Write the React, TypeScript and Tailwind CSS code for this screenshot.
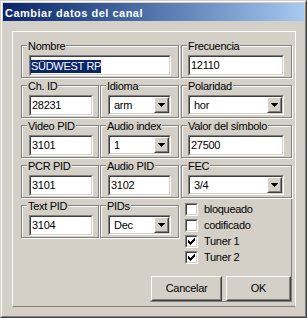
import React from "react";

function Sunken({ className, children }: { className: string; children?: React.ReactNode }) {
  return (
    <div className={"border border-t-[#808080] border-l-[#808080] border-b-white border-r-white " + className}>
      <div className="h-full border border-t-[#404040] border-l-[#404040] border-b-[#d4d0c8] border-r-[#d4d0c8] bg-white">
        {children}
      </div>
    </div>
  );
}

function Raised({ className, children }: { className: string; children?: React.ReactNode }) {
  return (
    <div className={"border border-t-white border-l-white border-b-[#404040] border-r-[#404040] bg-[#d4d0c8] " + className}>
      <div className="h-full border border-t-[#d4d0c8] border-l-[#d4d0c8] border-b-[#808080] border-r-[#808080] flex items-center justify-center">
        {children}
      </div>
    </div>
  );
}

function Group({ label, className, children }: { label: string; className: string; children?: React.ReactNode }) {
  return (
    <div className={"relative h-[33px] border border-[#808080] shadow-[inset_1px_1px_0_#ffffff,1px_1px_0_#ffffff] pt-[9px] " + className}>
      <span className="absolute top-[-6px] left-[5px] bg-[#d4d0c8] px-[1px] leading-[13px] whitespace-nowrap">{label}</span>
      {children}
    </div>
  );
}

function Edit({ value, className }: { value: string; className: string }) {
  return (
    <Sunken className={"h-[21px] " + className}>
      <div className="pl-[1px] leading-[15px] pt-[1px]">{value}</div>
    </Sunken>
  );
}

function Arrow() {
  return (
    <svg width="7" height="4" viewBox="0 0 7 4" shapeRendering="crispEdges">
      <path d="M0 0h7v1H0zM1 1h5v1H1zM2 2h3v1H2zM3 3h1v1H3z" fill="#000" />
    </svg>
  );
}

function Combo({ value, className }: { value: string; className: string }) {
  return (
    <Sunken className={"h-[20px] " + className}>
      <div className="flex h-full">
        <div className="flex-1 pl-[4px] leading-[15px] pt-[1px]">{value}</div>
        <Raised className="w-[15px] h-full">
          <Arrow />
        </Raised>
      </div>
    </Sunken>
  );
}

function Check({ label, checked }: { label: string; checked?: boolean }) {
  return (
    <div className="flex h-[16px] items-start">
      <Sunken className="w-[13px] h-[13px]">
        {checked && (
          <svg width="9" height="9" viewBox="0 0 9 9" shapeRendering="crispEdges" className="block">
            <path
              d="M7 1h1v1H7zM6 2h2v1H6zM1 3h1v1H1zM5 3h3v1H5zM1 4h2v1H1zM4 4h3v1H4zM1 5h5v1H1zM2 6h3v1H2zM3 7h1v1H3z"
              fill="#000"
            />
          </svg>
        )}
      </Sunken>
      <span className="ml-[6px] leading-[13px]">{label}</span>
    </div>
  );
}

export default function App() {
  return (
    <div className="w-[307px] h-[318px] flex flex-col bg-[#d4d0c8] border border-t-[#d4d0c8] border-l-[#d4d0c8] border-b-[#404040] border-r-[#404040] font-['Liberation_Sans',Arial,sans-serif] text-[11px] tracking-[-0.3px] text-black">
      <div className="flex-1 flex flex-col border border-t-white border-l-white border-b-[#808080] border-r-[#808080] p-[1px]">
        <div className="h-[18px] bg-linear-to-r from-[#0a246a] to-[#a6caf0] pl-[2px] pt-[4px]">
          <span className="block text-white font-bold leading-[13px] tracking-[0.5px]">Cambiar datos del canal</span>
        </div>
        <div className="relative mt-[10px] ml-[9px] mr-[8px] h-[276px] border border-t-white border-l-white border-r-white border-b-[#808080] pl-[8px] pt-[13px] pr-[4px] flex flex-col">
          <div className="absolute right-[3px] bottom-[4px] w-[142px] h-[103px] border-r border-b border-[#808080] pointer-events-none" />
          <div className="flex gap-[2px]">
            <div className="flex flex-col gap-[7px] w-[158px]">
              <Group label="Nombre" className="w-[158px] pl-[7px]">
                <Sunken className="h-[21px] w-[142px]">
                  <div className="pt-[1px]">
                    <span className="inline-block bg-[#0a246a] text-white leading-[13px]">SÜDWEST RP</span>
                  </div>
                </Sunken>
              </Group>
              <div className="flex gap-[1px]">
                <Group label="Ch. ID" className="w-[78px] pl-[7px]">
                  <Edit value="28231" className="w-[64px]" />
                </Group>
                <Group label="Idioma" className="w-[79px] pl-[7px]">
                  <Combo value="arm" className="w-[63px]" />
                </Group>
              </div>
              <div className="flex gap-[1px]">
                <Group label="Video PID" className="w-[78px] pl-[7px]">
                  <Edit value="3101" className="w-[64px]" />
                </Group>
                <Group label="Audio index" className="w-[79px] pl-[7px]">
                  <Combo value="1" className="w-[63px]" />
                </Group>
              </div>
              <div className="flex gap-[1px]">
                <Group label="PCR PID" className="w-[78px] pl-[7px]">
                  <Edit value="3101" className="w-[64px]" />
                </Group>
                <Group label="Audio PID" className="w-[79px] pl-[7px]">
                  <Edit value="3102" className="w-[63px]" />
                </Group>
              </div>
              <div className="flex gap-[1px]">
                <Group label="Text PID" className="w-[78px] pl-[7px]">
                  <Edit value="3104" className="w-[64px]" />
                </Group>
                <Group label="PIDs" className="w-[79px] pl-[7px]">
                  <Combo value="Dec" className="w-[63px]" />
                </Group>
              </div>
            </div>
            <div className="flex flex-col w-[111px]">
              <div className="flex flex-col gap-[7px]">
                <Group label="Frecuencia" className="w-[111px] pl-[6px]">
                  <Edit value="12110" className="w-[96px]" />
                </Group>
                <Group label="Polaridad" className="w-[111px] pl-[6px]">
                  <Combo value="hor" className="w-[96px]" />
                </Group>
                <Group label="Valor del símbolo" className="w-[111px] pl-[6px]">
                  <Edit value="27500" className="w-[96px]" />
                </Group>
                <Group label="FEC" className="w-[111px] pl-[6px]">
                  <Combo value="3/4" className="w-[96px]" />
                </Group>
              </div>
              <div className="mt-[5px] ml-[4px] flex flex-col">
                <Check label="bloqueado" />
                <Check label="codificado" />
                <Check label="Tuner 1" checked />
                <Check label="Tuner 2" checked />
              </div>
            </div>
          </div>
          <div className="mt-[9px] flex justify-end gap-[4px]">
            <Raised className="w-[71px] h-[25px]">
              <span className="leading-[13px]">Cancelar</span>
            </Raised>
            <Raised className="w-[65px] h-[25px]">
              <span className="leading-[13px]">OK</span>
            </Raised>
          </div>
        </div>
      </div>
    </div>
  );
}
